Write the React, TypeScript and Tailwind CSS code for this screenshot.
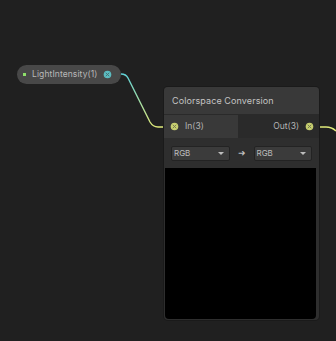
function Port({ color }: { color: string }) {
  return (
    <svg width="9" height="9" viewBox="0 0 9 9" className="block">
      <circle cx="4.5" cy="4.5" r="3.8" fill={color} opacity="0.85" />
      <path d="M2.8 2.8 L6.2 6.2 M6.2 2.8 L2.8 6.2" stroke="#3a3a3a" strokeWidth="0.9" opacity="0.6" />
    </svg>
  );
}

function Dropdown({ value }: { value: string }) {
  return (
    <div className="flex h-[15px] flex-1 items-center justify-between rounded-[2px] border border-[#232323] bg-[#3b3b3b] pl-[2px] pr-[5px] text-[8px] text-[#bdbdbd]">
      <span>{value}</span>
      <span className="h-0 w-0 border-x-[3px] border-t-[3px] border-x-transparent border-t-[#bdbdbd]" />
    </div>
  );
}

export default function App() {
  return (
    <div className="relative h-[341px] w-[336px] overflow-hidden bg-[#202020] font-['Inter',sans-serif]">
      {/* wires */}
      <svg className="absolute inset-0" width="336" height="341">
        <defs>
          <linearGradient id="w1" x1="0" y1="0" x2="0" y2="1">
            <stop offset="0" stopColor="#5fd0d6" />
            <stop offset="1" stopColor="#e0ea7a" />
          </linearGradient>
        </defs>
        <path d="M121 74 Q126 74 128 78 L150 122 Q153 127 158 127 L172 127" fill="none" stroke="url(#w1)" strokeWidth="1.4" />
        <path d="M312 127 L326 127 Q332 127 336 131" fill="none" stroke="#e0ea7a" strokeWidth="1.4" />
      </svg>

      {/* property node */}
      <div className="absolute left-[17px] top-[65px] flex h-[19px] w-[104px] items-center rounded-full bg-[#484848] pl-[6px]">
        <span className="h-[3px] w-[3px] bg-[#8ee06a]" />
        <span className="ml-[6px] text-[8.5px] tracking-[0.1px] text-[#b8b8b8]">LightIntensity(1)</span>
        <span className="ml-[5px]"><Port color="#5fd0d6" /></span>
      </div>

      {/* conversion node */}
      <div className="absolute left-[164px] top-[87px] flex h-[233px] w-[155px] flex-col overflow-hidden rounded-[4px] bg-[#2e2e2e] shadow-[0_0_0_1px_#1a1a1a]">
        <div className="flex h-[27px] items-center bg-[#393939] pl-[8px] text-[9px] tracking-[0.1px] text-[#c4c4c4]">
          Colorspace Conversion
        </div>
        <div className="flex h-[24px] border-t border-[#2a2a2a]">
          <div className="flex w-[74px] items-center bg-[#393939] pl-[6px] text-[8.5px] text-[#b4b4b4]">
            <Port color="#e0ea7a" />
            <span className="ml-[6px]">In(3)</span>
          </div>
          <div className="flex flex-1 items-center justify-end bg-[#2a2a2a] pr-[5px] text-[8.5px] text-[#b4b4b4]">
            <span className="mr-[6px]">Out(3)</span>
            <Port color="#e0ea7a" />
          </div>
        </div>
        <div className="flex h-[30px] items-center gap-[8px] bg-[#2e2e2e] px-[7px]">
          <Dropdown value="RGB" />
          <span className="text-[9px] text-[#bdbdbd]">➜</span>
          <Dropdown value="RGB" />
        </div>
        <div className="mb-[1px] ml-[1px] mr-[3px] flex-1 rounded-b-[4px] bg-black" />
      </div>
    </div>
  );
}
